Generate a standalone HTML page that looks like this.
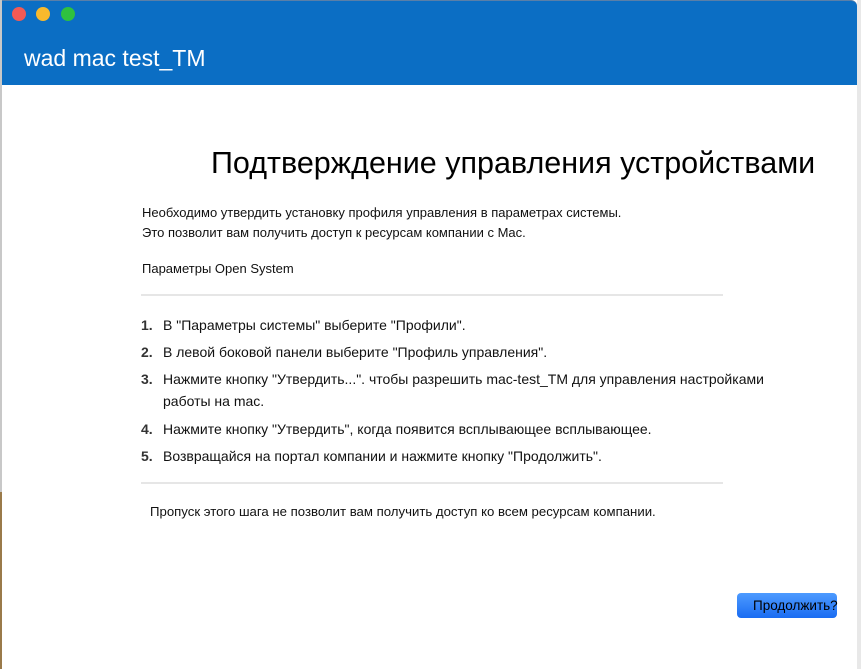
<!DOCTYPE html>
<html><head><meta charset="utf-8"><style>
*{margin:0;padding:0;box-sizing:border-box}
body{width:861px;height:669px;overflow:hidden;background:#fff;font-family:"Liberation Sans",sans-serif;position:relative;color:#111}
.l{position:absolute;white-space:nowrap;font-size:13px;line-height:16px}
.i{font-size:14px}
</style></head><body>
<div style="position:absolute;left:0;top:0;width:2px;height:669px;background:#c8c8c8"></div>
<div style="position:absolute;left:0;top:492px;width:2px;height:177px;background:#9a7a4a"></div>
<div style="position:absolute;left:857px;top:0;width:4px;height:669px;background:#e8e8e8"></div>
<div style="position:absolute;left:2px;top:0;width:855px;height:85px;background:#0b6ec4;border-top-right-radius:6px;border-top:1px solid #5a7fa8"></div>
<div style="position:absolute;left:12px;top:7px;width:14px;height:14px;border-radius:50%;background:#f25a55"></div>
<div style="position:absolute;left:36px;top:7px;width:14px;height:14px;border-radius:50%;background:#f8b92c"></div>
<div style="position:absolute;left:61px;top:7px;width:14px;height:14px;border-radius:50%;background:#2fc13f"></div>
<div style="position:absolute;left:24px;top:45px;font-size:23px;color:#fff;white-space:nowrap">wad mac test_TM</div>
<div style="position:absolute;left:211px;top:146px;font-size:30.5px;white-space:nowrap;color:#000">Подтверждение управления устройствами</div>
<div class="l" style="left:142px;top:205px">Необходимо утвердить установку профиля управления в параметрах системы.</div>
<div class="l" style="left:142px;top:225px">Это позволит вам получить доступ к ресурсам компании с Mac.</div>
<div class="l" style="left:142px;top:261px">Параметры Open System</div>
<div style="position:absolute;left:141px;top:294px;width:582px;height:2px;background:#e6e6e6"></div>
<div class="l i" style="left:141px;top:317px;font-weight:bold;color:#333">1.</div><div class="l i" style="left:163px;top:317px">В "Параметры системы" выберите "Профили".</div>
<div class="l i" style="left:141px;top:344px;font-weight:bold;color:#333">2.</div><div class="l i" style="left:163px;top:344px">В левой боковой панели выберите "Профиль управления".</div>
<div class="l i" style="left:141px;top:371px;font-weight:bold;color:#333">3.</div><div class="l i" style="left:163px;top:371px">Нажмите кнопку "Утвердить...". чтобы разрешить mac-test_TM для управления настройками</div>
<div class="l i" style="left:163px;top:393px">работы на mac.</div>
<div class="l i" style="left:141px;top:421px;font-weight:bold;color:#333">4.</div><div class="l i" style="left:163px;top:421px">Нажмите кнопку "Утвердить", когда появится всплывающее всплывающее.</div>
<div class="l i" style="left:141px;top:448px;font-weight:bold;color:#333">5.</div><div class="l i" style="left:163px;top:448px">Возвращайся на портал компании и нажмите кнопку "Продолжить".</div>
<div style="position:absolute;left:141px;top:482px;width:582px;height:2px;background:#e6e6e6"></div>
<div class="l" style="left:150px;top:504px;font-size:13.2px">Пропуск этого шага не позволит вам получить доступ ко всем ресурсам компании.</div>
<div style="position:absolute;left:737px;top:593px;width:100px;height:25px;border-radius:4px;background:linear-gradient(#4d9bff,#1a6cf2)"></div>
<div class="l" style="left:753px;top:598px;font-size:13.5px;color:#000">Продолжить?</div>
</body></html>
